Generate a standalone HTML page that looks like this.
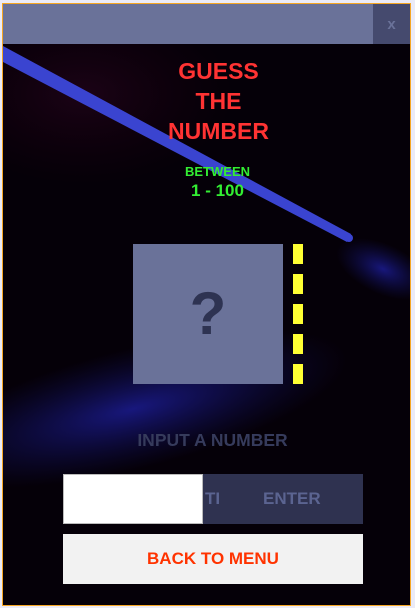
<!DOCTYPE html>
<html><head><style>
html,body{margin:0;padding:0;width:415px;height:608px;background:#ebebf7;overflow:hidden;font-family:"Liberation Sans","DejaVu Sans",sans-serif;}
#win{position:absolute;left:2px;top:3px;width:407px;height:601px;border:1px solid #f5a623;background:#050008;overflow:hidden;}
#hdr{position:absolute;left:0;top:0;width:407px;height:40px;background:#6a7299;}
#x{position:absolute;right:0;top:0;width:37px;height:40px;background:#454a6e;color:#6a7299;font-weight:bold;font-size:15px;text-align:center;line-height:42px;}
.t{position:absolute;left:0;width:100%;text-align:center;font-weight:bold;}
</style></head><body>
<div id="win">
<svg width="407" height="601" style="position:absolute;left:0;top:0">
<defs>
<radialGradient id="g1" cx="0.5" cy="0.5" r="0.5"><stop offset="0" stop-color="#1a1a8a" stop-opacity="0.9"/><stop offset="1" stop-color="#10105a" stop-opacity="0"/></radialGradient>
<radialGradient id="g2" cx="0.5" cy="0.5" r="0.5"><stop offset="0" stop-color="#2a0420" stop-opacity="0.6"/><stop offset="1" stop-color="#200010" stop-opacity="0"/></radialGradient>
</defs>
<ellipse cx="80" cy="90" rx="150" ry="90" fill="url(#g2)"/>
<ellipse cx="130" cy="405" rx="220" ry="60" fill="url(#g1)" transform="rotate(-14 130 405)"/>
<ellipse cx="380" cy="265" rx="50" ry="25" fill="url(#g1)" transform="rotate(25 380 265)"/>
<polygon points="0,42 0,58 344,238 348,230" fill="#3a44d0"/>
<circle cx="346" cy="234" r="4" fill="#3a44d0"/>
</svg>
<div id="hdr"></div><div id="x">x</div>
<div class="t" style="top:52px;font-size:23px;line-height:30px;color:#ff3333;left:12px">GUESS<br>THE<br>NUMBER</div>
<div class="t" style="top:160px;font-size:13px;color:#33ee33;left:11px">BETWEEN</div>
<div class="t" style="top:177px;font-size:17px;color:#33ee33;left:11px">1 - 100</div>
<div style="position:absolute;left:130px;top:240px;width:150px;height:140px;background:#6a7299;color:#2e3352;font-weight:bold;font-size:60px;text-align:center;line-height:140px">?</div>
<div style="position:absolute;left:290px;top:240px;width:10px;height:140px;background:repeating-linear-gradient(#ffff33 0 20px,transparent 20px 30px)"></div>
<div class="t" style="top:426px;font-size:17.5px;color:#363b5c;left:6px">INPUT A NUMBER</div>
<div style="position:absolute;left:60px;top:470px;width:140px;height:50px;background:#fff;border:1px solid #bbb;box-sizing:border-box"></div>
<div style="position:absolute;left:200px;top:470px;width:160px;height:50px;background:#2f3250;color:#5b6491;font-weight:bold;font-size:17px;line-height:50px">
<span style="position:absolute;left:2px">TI</span><span style="position:absolute;left:60px">ENTER</span></div>
<div style="position:absolute;left:60px;top:530px;width:300px;height:50px;background:#f2f2f2;color:#ff3300;font-weight:bold;font-size:17px;line-height:50px;text-align:center">BACK TO MENU</div>
</div>
</body></html>
